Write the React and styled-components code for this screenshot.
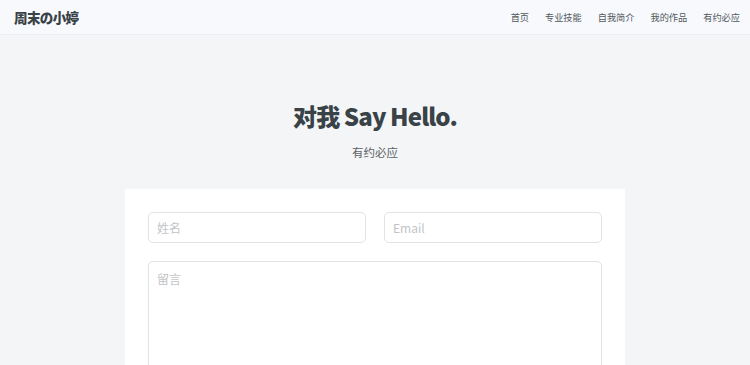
import React from "react";
import styled, { createGlobalStyle } from "styled-components";

const GlobalStyle = createGlobalStyle`
  html, body {
    margin: 0;
    padding: 0;
    background-color: #f4f5f7;
    font-family: "Noto Sans CJK SC", "Noto Sans", sans-serif;
  }
  * {
    box-sizing: border-box;
  }
`;

const Header = styled.header`
  height: 35px;
  display: flex;
  align-items: center;
  justify-content: space-between;
  padding: 0 10px 0 14px;
  background-color: #f8f9fc;
  border-bottom: 1px solid #eeeff2;
`;

const Logo = styled.div`
  font-size: 13.5px;
  font-weight: 900;
  color: #384247;
  letter-spacing: -0.6px;
`;

const Nav = styled.nav`
  display: flex;
  gap: 16px;
`;

const NavItem = styled.a`
  font-size: 9.2px;
  font-weight: 400;
  color: #50585c;
  text-decoration: none;
  cursor: pointer;
`;

const Hero = styled.section`
  padding-top: 63px;
  text-align: center;
`;

const Title = styled.h1`
  margin: 0;
  font-size: 24px;
  line-height: 36px;
  font-weight: 900;
  color: #384247;
  letter-spacing: -0.9px;
`;

const Subtitle = styled.p`
  margin: 9px 0 0;
  font-size: 11.5px;
  line-height: 18px;
  color: #5b6266;
`;

const Card = styled.form`
  width: 500px;
  margin: 28px auto 0;
  padding: 23px 23px;
  background-color: #ffffff;
  display: grid;
  grid-template-columns: 1fr 1fr;
  gap: 18px;
`;

const Input = styled.input`
  height: 31px;
  width: 100%;
  padding: 0 8px;
  border: 1px solid #e2e3e5;
  border-radius: 5px;
  font-family: inherit;
  font-size: 12px;
  color: #333;
  outline: none;
  &::placeholder {
    color: #c2c4c6;
  }
`;

const TextArea = styled.textarea`
  grid-column: 1 / -1;
  height: 160px;
  width: 100%;
  padding: 8px 8px;
  border: 1px solid #e2e3e5;
  border-radius: 5px;
  font-family: inherit;
  font-size: 12px;
  color: #333;
  resize: none;
  outline: none;
  &::placeholder {
    color: #c2c4c6;
  }
`;

const links = ["首页", "专业技能", "自我简介", "我的作品", "有约必应"];

export default function App() {
  return (
    <>
      <GlobalStyle />
      <Header>
        <Logo>周末の小婷</Logo>
        <Nav>
          {links.map((l) => (
            <NavItem key={l}>{l}</NavItem>
          ))}
        </Nav>
      </Header>
      <Hero>
        <Title>对我 Say Hello.</Title>
        <Subtitle>有约必应</Subtitle>
      </Hero>
      <Card onSubmit={(e) => e.preventDefault()}>
        <Input placeholder="姓名" />
        <Input placeholder="Email" />
        <TextArea placeholder="留言" />
      </Card>
    </>
  );
}
